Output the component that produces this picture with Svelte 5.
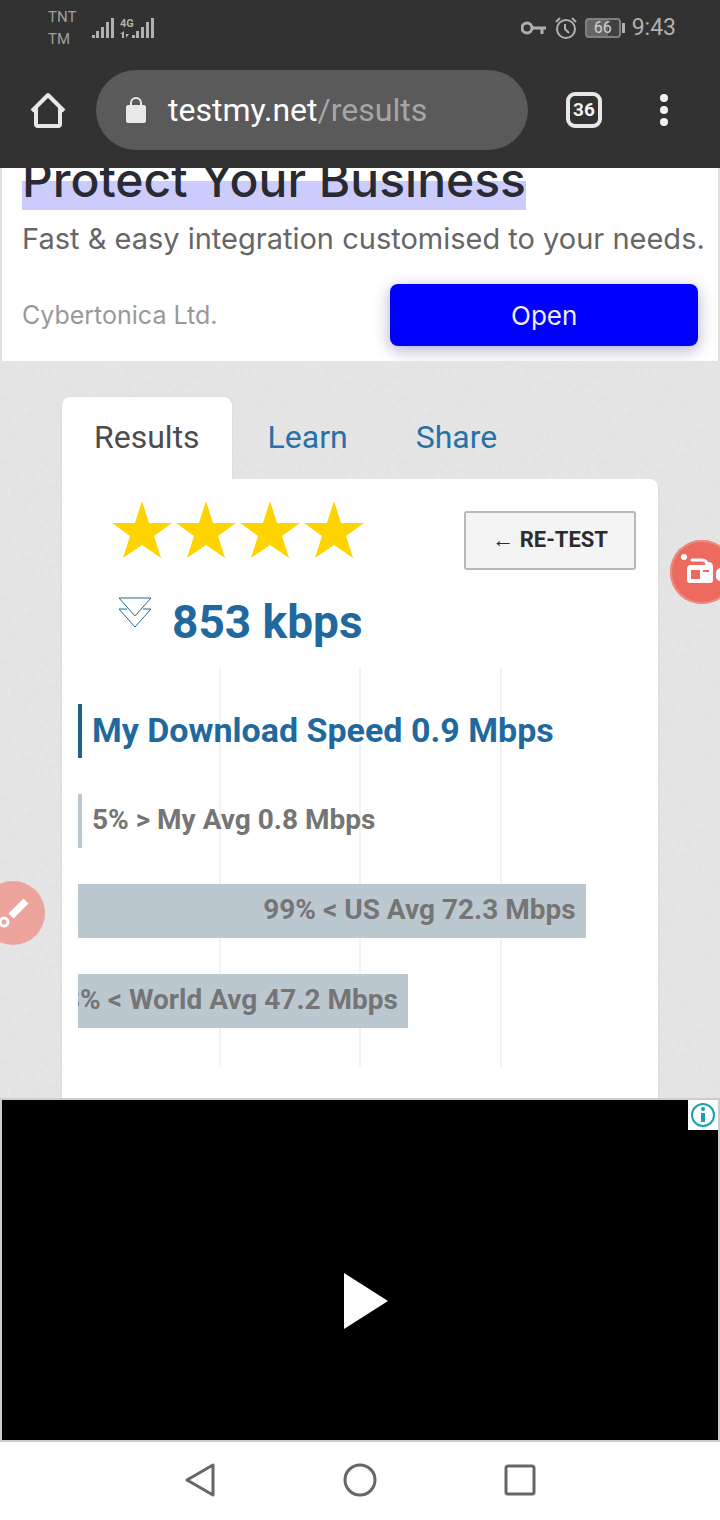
<script>
  const tabs = ['Results', 'Learn', 'Share'];
  let activeTab = $state('Results');

  const stars = [1, 2, 3, 4];
  const signal = [3, 7, 11, 16, 20];

  // width is the share of the chart, inside puts the label in the bar
  const bars = [
    { label: 'My Download Speed 0.9 Mbps', width: 0.7, inside: false, mine: true },
    { label: '5% > My Avg 0.8 Mbps', width: 0.7, inside: false, mine: false },
    { label: '99% < US Avg 72.3 Mbps', width: 90, inside: true, mine: false },
    { label: '98% < World Avg 47.2 Mbps', width: 58.5, inside: true, mine: false }
  ];
</script>

<div class="screen">
  <header>
    <div class="status">
      <div class="carriers">
        <span>TNT</span>
        <span>TM</span>
      </div>
      <svg width="22" height="20" viewBox="0 0 22 20" fill="#b0b0b0">
        {#each signal as h, i}
          <rect x={i * 5 - (i ? 1 : 0)} y={20 - h} width="3" height={h} />
        {/each}
      </svg>
      <svg class="data" width="34" height="22" viewBox="0 0 34 22" fill="#b0b0b0">
        <text x="0" y="10" font-size="11" font-weight="700">4G</text>
        <path d="M4 14v7H2v-4H0zM6 14v3h3l-3 4v-7z" />
        {#each signal as h, i}
          <rect x={12 + i * 5 - (i ? 1 : 0)} y={21 - h} width="3" height={h} />
        {/each}
      </svg>
      <div class="status-right">
        <svg width="26" height="14" viewBox="0 0 26 14" fill="none" stroke="#b0b0b0" stroke-width="3">
          <circle cx="6" cy="7" r="5" />
          <path d="M11 7h14M21 7v6" />
        </svg>
        <svg width="22" height="22" viewBox="0 0 22 22" fill="none" stroke="#b0b0b0" stroke-width="2">
          <circle cx="11" cy="12" r="9" />
          <path d="M10 7v5l4 4M1 5l4-4M21 5l-4-4" />
        </svg>
        <div class="battery"><span>66</span></div>
        <span class="clock">9:43</span>
      </div>
    </div>

    <div class="toolbar">
      <button class="icon" aria-label="Home">
        <svg width="36" height="38" viewBox="0 0 36 38" fill="none" stroke="#e8e8e8" stroke-width="4" stroke-linejoin="round">
          <path d="M2 20L18 4l16 16M6 17v16q0 2 2 2h20q2 0 2-2V17" />
        </svg>
      </button>
      <button class="address">
        <svg width="20" height="28" viewBox="0 0 20 28">
          <path d="M5 10V7a5 5 0 0 1 10 0v3" fill="none" stroke="#e8e8e8" stroke-width="2" />
          <rect y="9" width="20" height="18" rx="2" fill="#e8e8e8" />
        </svg>
        <span>testmy.net<span class="path">/results</span></span>
      </button>
      <button class="count" aria-label="Open tabs">36</button>
      <button class="icon more" aria-label="Menu">
        <svg width="10" height="34" viewBox="0 0 10 34" fill="#f2f2f2">
          <circle cx="5" cy="5" r="4" />
          <circle cx="5" cy="17" r="4" />
          <circle cx="5" cy="29" r="4" />
        </svg>
      </button>
    </div>
  </header>

  <section class="ad">
    <h2>Protect Your Business</h2>
    <p>Fast &amp; easy integration customised to your needs.</p>
    <div class="ad-row">
      <span>Cybertonica Ltd.</span>
      <button>Open</button>
    </div>
  </section>

  <main>
    <nav class="tabs">
      {#each tabs as tab}
        <button class:active={tab === activeTab} onclick={() => (activeTab = tab)}>{tab}</button>
      {/each}
    </nav>

    <div class="card">
      <div class="top">
        <div class="score">
          <div class="stars">
            {#each stars as star}
              <svg width="64" height="58" viewBox="0 0 64 58" fill="#fdd400">
                <path d="M32 0l7 22h23L44 35l7 22L32 44 13 57l7-22L2 22h23z" />
              </svg>
            {/each}
          </div>
          <div class="speed">
            <svg width="34" height="32" viewBox="0 0 34 32" fill="none" stroke="#1f6a94">
              <path d="M1 1h32L17 19zM9 12H1l16 18 16-18h-8" />
              <path d="M14 16l3 3 3-3" stroke="#d64545" />
            </svg>
            <h1>853 kbps</h1>
          </div>
        </div>
        <button class="retest">← RE-TEST</button>
      </div>

      <div class="chart">
        {#each bars as bar}
          <div class="row" class:mine={bar.mine}>
            <div class="bar" style="width: {bar.width}%">
              {#if bar.inside}<span>{bar.label}</span>{/if}
            </div>
            {#if !bar.inside}<span class="label">{bar.label}</span>{/if}
          </div>
        {/each}
      </div>
    </div>

    <button class="float camera" aria-label="Record screen">
      <svg width="64" height="64" viewBox="0 0 64 64">
        <circle cx="14" cy="17" r="3" fill="#fff" />
        <path d="M22 20h10q5 0 5 5" fill="none" stroke="#fff" stroke-width="3" stroke-linecap="round" />
        <path d="M21 25h14l3-3q5 0 5 5v13q0 3-3 3H20q-3 0-3-3V29q0-4 4-4z" fill="#fff" />
        <rect x="21" y="30" width="9" height="9" fill="#ec6a5e" />
        <path d="M33 31h6" stroke="#ec6a5e" stroke-width="2" />
        <path d="M46 33q0-4 6-6v15q-6-2-6-5z" fill="#fff" />
      </svg>
    </button>
    <button class="float brush" aria-label="Draw on screen">
      <svg width="64" height="64" viewBox="0 0 64 64">
        <path d="M30 35L45 20" fill="none" stroke="#fff" stroke-width="7" />
        <circle cx="23" cy="41" r="4" fill="none" stroke="#fff" stroke-width="3" />
      </svg>
    </button>
  </main>

  <section class="video">
    <button class="info" aria-label="About this ad">
      <svg width="26" height="26" viewBox="0 0 26 26">
        <circle cx="13" cy="13" r="11" fill="none" stroke="#17a2ad" stroke-width="2" />
        <circle cx="13" cy="7" r="2" fill="#17a2ad" />
        <rect x="11" y="11" width="4" height="9" fill="#17a2ad" />
      </svg>
    </button>
    <button class="play" aria-label="Play">
      <svg width="44" height="56" viewBox="0 0 44 56" fill="#fff"><path d="M0 0l44 28L0 56z" /></svg>
    </button>
  </section>

  <nav class="keys">
    <button aria-label="Back">
      <svg width="34" height="36" viewBox="0 0 34 36"><path d="M4 18L30 3v30z" /></svg>
    </button>
    <button aria-label="Home screen">
      <svg width="34" height="36" viewBox="0 0 34 36"><circle cx="17" cy="18" r="15" /></svg>
    </button>
    <button aria-label="Recent apps">
      <svg width="34" height="36" viewBox="0 0 34 36"><rect x="3" y="4" width="28" height="28" rx="2" /></svg>
    </button>
  </nav>
</div>

<style>
  :global(body) {
    background: #fff;
  }
  .screen {
    display: flex;
    flex-direction: column;
    min-height: 100vh;
    overflow: hidden;
    font-family: Roboto, sans-serif;
  }
  button {
    padding: 0;
    border: none;
    background: none;
    font-family: inherit;
    cursor: pointer;
  }
  svg {
    display: block;
    flex-shrink: 0;
  }
  h1,
  h2,
  p {
    margin: 0;
  }

  header {
    position: relative;
    background: #323232;
    color: #b0b0b0;
  }
  .status {
    display: flex;
    align-items: center;
    height: 56px;
    padding: 0 44px 0 48px;
  }
  .carriers {
    display: flex;
    flex-direction: column;
    width: 44px;
    font-size: 15px;
    line-height: 22px;
    color: #a0a0a0;
  }
  .data {
    margin-left: 6px;
  }
  .status-right {
    display: flex;
    align-items: center;
    gap: 8px;
    margin-left: auto;
  }
  .battery {
    position: relative;
    box-sizing: border-box;
    width: 36px;
    height: 20px;
    margin-right: 3px;
    border: 2px solid #808080;
    border-radius: 4px;
    background: linear-gradient(90deg, #666 66%, #404040 66%);
    color: #d0d0d0;
    font-size: 16px;
    line-height: 16px;
    text-align: center;
  }
  .battery::after {
    content: '';
    position: absolute;
    top: 3px;
    right: -6px;
    width: 3px;
    height: 10px;
    background: #b0b0b0;
  }
  .clock {
    font-size: 23px;
    line-height: 28px;
  }
  .toolbar {
    display: flex;
    align-items: center;
    height: 80px;
    padding: 14px 51px 18px 30px;
  }
  .address {
    display: flex;
    flex: 1;
    align-items: center;
    gap: 22px;
    height: 80px;
    margin: 0 38px 0 30px;
    padding: 0 30px;
    border-radius: 40px;
    background: #5a5a5a;
    color: #fff;
    font-size: 32px;
    text-align: left;
  }
  .path {
    color: #a6a6a6;
  }
  .count {
    box-sizing: border-box;
    width: 36px;
    height: 36px;
    border: 4px solid #e8e8e8;
    border-radius: 9px;
    color: #f2f2f2;
    font-size: 19px;
    font-weight: 700;
    line-height: 28px;
  }
  .more {
    margin-left: 57px;
  }

  .ad {
    padding: 0 20px 15px;
    overflow: hidden;
    border: 2px solid #e0e0e0;
    border-width: 0 2px;
    background: #fff;
    font-family: Inter, sans-serif;
  }
  .ad h2 {
    width: fit-content;
    margin-top: -18px;
    background: linear-gradient(transparent 31px, #ccccfc 31px);
    color: #2a2a33;
    font-size: 48px;
    font-weight: 500;
    line-height: 60px;
    white-space: nowrap;
  }
  .ad p {
    margin-top: 9px;
    color: #666;
    font-size: 29px;
    line-height: 40px;
    white-space: nowrap;
  }
  .ad-row {
    display: flex;
    align-items: center;
    justify-content: space-between;
    margin-top: 25px;
    color: #999;
    font-size: 25px;
  }
  .ad-row button {
    width: 45.5%;
    height: 62px;
    border-radius: 8px;
    background: #0000fe;
    box-shadow: 0 4px 16px rgba(60, 50, 130, 0.4);
    color: #eee;
    font-size: 26px;
  }

  main {
    position: relative;
    flex: 1;
    padding: 36px 62px 0;
    /* paper grain */
    background: #e6e6e6
      url("data:image/svg+xml,%3Csvg xmlns='http://www.w3.org/2000/svg' width='200' height='200'%3E%3Cfilter id='n'%3E%3CfeTurbulence type='fractalNoise' baseFrequency='.25' numOctaves='3' stitchTiles='stitch'/%3E%3CfeColorMatrix type='saturate' values='0'/%3E%3C/filter%3E%3Crect width='200' height='200' filter='url(%23n)' opacity='.08'/%3E%3C/svg%3E");
  }
  .tabs {
    display: flex;
    gap: 4px;
  }
  .tabs button {
    padding: 0 32px 2px;
    border-radius: 8px 8px 0 0;
    color: #2672a8;
    font-size: 32px;
    line-height: 80px;
  }
  .tabs .active {
    background: #fff;
    color: #4c4c4f;
    box-shadow: 0 0 2px #ccc;
  }
  .card {
    position: relative;
    padding: 22px 16px 31px;
    border-radius: 0 8px 0 0;
    background: #fff;
    box-shadow: 0 2px 2px #d0d0d0;
  }
  .top {
    display: flex;
    justify-content: space-between;
    align-items: flex-start;
    padding: 0 6px 0 32px;
  }
  .stars {
    display: flex;
  }
  .speed {
    display: flex;
    align-items: flex-start;
    gap: 20px;
    padding: 38px 0 0 8px;
  }
  .speed h1 {
    color: #1f699f;
    font-size: 46px;
    font-weight: 700;
    line-height: 50px;
  }
  .retest {
    margin-top: 10px;
    padding: 0 26px 2px;
    border: 2px solid #b8b8b8;
    border-radius: 3px;
    background: #f4f4f4;
    color: #2c2c2c;
    font-size: 22px;
    font-weight: 700;
    line-height: 53px;
  }
  .chart {
    --line: linear-gradient(#f3f3f3, #f3f3f3);
    display: flex;
    flex-direction: column;
    gap: 36px;
    margin-top: 20px;
    padding: 37px 0 39px;
    background: var(--line) 25% 0, var(--line) 50% 0, var(--line) 75% 0;
    background-size: 2px 100%;
    background-repeat: no-repeat;
  }
  .row {
    display: flex;
    align-items: center;
    height: 54px;
    color: #757575;
    font-size: 28px;
    font-weight: 700;
    line-height: 52px;
    white-space: nowrap;
  }
  .bar {
    display: flex;
    justify-content: flex-end;
    flex-shrink: 0;
    height: 54px;
    overflow: hidden;
    background: #bcc8d0;
  }
  .bar span {
    padding-right: 10px;
  }
  .label {
    padding: 0 0 2px 10px;
  }
  .mine {
    color: #1f699f;
    font-size: 34px;
  }
  .mine .bar {
    background: #1f5f8c;
  }

  .float {
    position: absolute;
    width: 64px;
    height: 64px;
    border-radius: 50%;
  }
  .camera {
    top: 179px;
    right: -14px;
    background: #ec6a5e;
    box-shadow: inset 0 0 0 2px #ee8a80;
  }
  .brush {
    top: 520px;
    left: -19px;
    background: #eca49c;
  }

  .video {
    position: relative;
    display: flex;
    align-items: center;
    justify-content: center;
    min-height: 340px;
    border: 2px solid #ccc;
    background: #000;
  }
  .info {
    position: absolute;
    top: 0;
    right: 0;
    padding: 2px;
    background: #fff;
  }
  .play {
    padding: 62px 0 0 12px;
  }

  .keys {
    display: flex;
    justify-content: center;
    gap: 126px;
    padding: 20px 0 22px;
    background: #fff;
  }
  .keys svg {
    fill: none;
    stroke: #666;
    stroke-width: 3;
    stroke-linejoin: round;
  }
</style>
